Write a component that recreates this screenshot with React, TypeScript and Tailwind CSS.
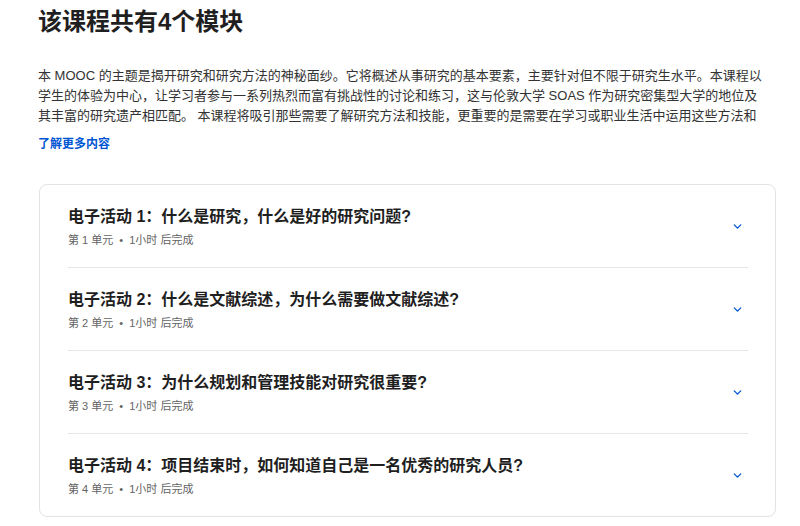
import { ChevronDown } from "lucide-react";

const modules = [
  { title: "电子活动 1：什么是研究，什么是好的研究问题?", unit: "第 1 单元" },
  { title: "电子活动 2：什么是文献综述，为什么需要做文献综述?", unit: "第 2 单元" },
  { title: "电子活动 3：为什么规划和管理技能对研究很重要?", unit: "第 3 单元" },
  { title: "电子活动 4：项目结束时，如何知道自己是一名优秀的研究人员?", unit: "第 4 单元" },
];

function ModuleRow({ title, unit, last }: { title: string; unit: string; last: boolean }) {
  return (
    <div className={last ? "" : "border-b border-[#e5e7eb]"}>
      <div className="flex items-center justify-between pt-[21px] pb-[20px] pr-[4px]">
        <div>
          <h3 className="text-[16px] leading-[22px] font-bold text-[#1f1f1f]">{title}</h3>
          <p className="mt-[5px] text-[11px] leading-[14px] text-[#636363]">
            {unit} <span className="mx-[3px]">•</span> 1小时 后完成
          </p>
        </div>
        <ChevronDown className="w-[13px] h-[13px] text-[#0056d2]" strokeWidth={2.5} />
      </div>
    </div>
  );
}

export default function App() {
  return (
    <div
      className="bg-white w-[800px] h-[526px] overflow-hidden pl-[38px] pr-[24px]"
      style={{ fontFamily: '"Liberation Sans", "Noto Sans CJK SC", sans-serif' }}
    >
      <h2 className="pt-[6px] text-[24px] leading-[32px] font-bold text-[#1f1f1f]">该课程共有4个模块</h2>
      {/* description is collapsed to three lines until expanded */}
      <p className="mt-[28px] w-[730px] h-[60px] overflow-hidden text-[13px] leading-[20px] text-[#333]">
        本 MOOC 的主题是揭开研究和研究方法的神秘面纱。它将概述从事研究的基本要素，主要针对但不限于研究生水平。本课程以学生的体验为中心，让学习者参与一系列热烈而富有挑战性的讨论和练习，这与伦敦大学 SOAS 作为研究密集型大学的地位及其丰富的研究遗产相匹配。 本课程将吸引那些需要了解研究方法和技能，更重要的是需要在学习或职业生活中运用这些方法和
      </p>
      <a className="block mt-[10px] text-[12px] leading-[16px] font-bold text-[#0056d2]">了解更多内容</a>
      <div className="mt-[32px] ml-[1px] w-[737px] rounded-[8px] border border-[#e1e3e6] pl-[28px] pr-[27px]">
        {modules.map((m, i) => (
          <ModuleRow key={m.unit} title={m.title} unit={m.unit} last={i === modules.length - 1} />
        ))}
      </div>
    </div>
  );
}
